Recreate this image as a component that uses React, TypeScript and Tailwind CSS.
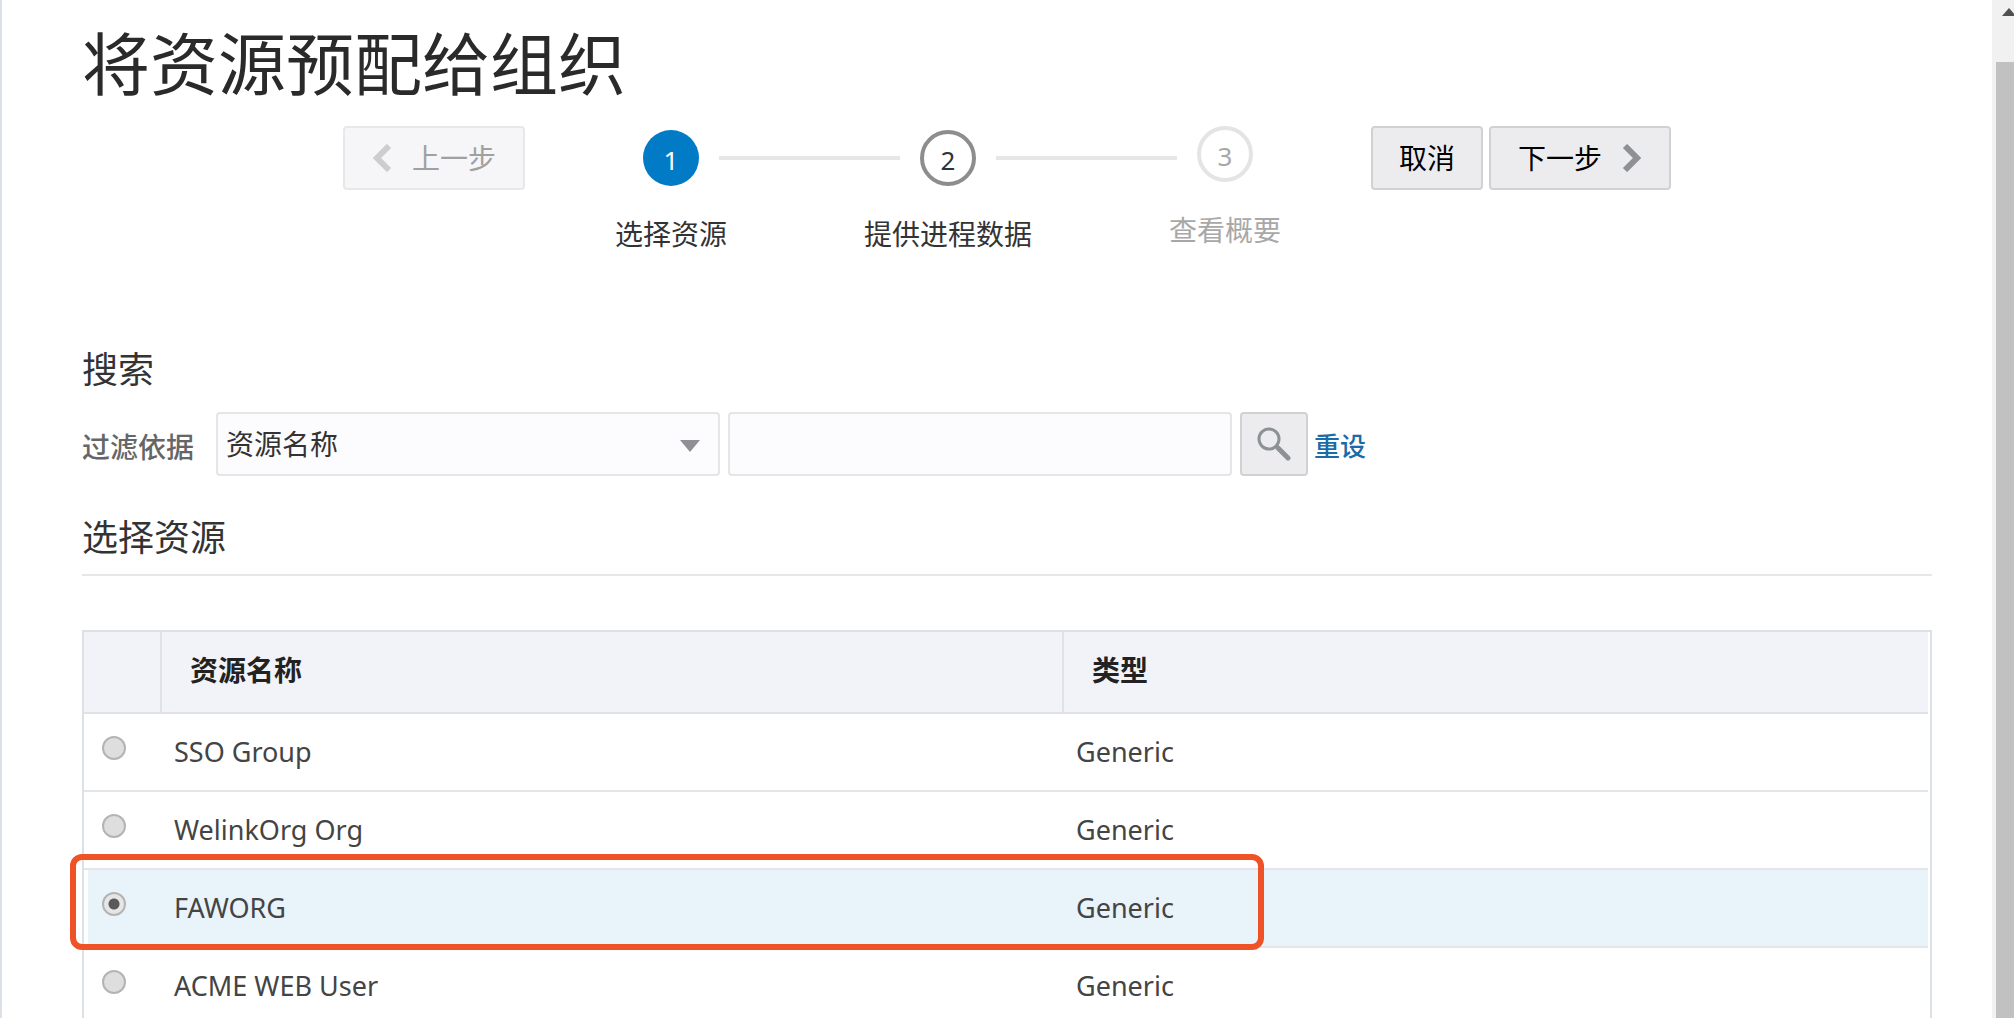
import React from 'react';
import clsx from 'clsx';

interface WizardStep {
  number: number;
  label: string;
  state: 'current' | 'next' | 'disabled';
}

interface Resource {
  id: string;
  name: string;
  type: string;
}

const steps: WizardStep[] = [
  { number: 1, label: '选择资源', state: 'current' },
  { number: 2, label: '提供进程数据', state: 'next' },
  { number: 3, label: '查看概要', state: 'disabled' }
];

const resources: Resource[] = [
  { id: 'sso-group', name: 'SSO Group', type: 'Generic' },
  { id: 'welink-org', name: 'WelinkOrg Org', type: 'Generic' },
  { id: 'faworg', name: 'FAWORG', type: 'Generic' },
  { id: 'acme-web-user', name: 'ACME WEB User', type: 'Generic' }
];

const Chevron: React.FC<{ direction: 'left' | 'right'; className?: string }> = ({ direction, className }) => (
  <svg viewBox="0 0 20 28" className={clsx('h-7 w-5', className)} fill="none" stroke="currentColor" strokeWidth="6" aria-hidden="true">
    <path d={direction === 'left' ? 'M17 2 L5 14 L17 26' : 'M3 2 L15 14 L3 26'} />
  </svg>
);

const WizardSteps: React.FC = () => (
  <ol className="flex items-start">
    {steps.map((step) => (
      <React.Fragment key={step.number}>
        {step.number > 1 && <li aria-hidden="true" className="mx-5 mt-[30px] h-1 w-[181px] bg-[#e6e6e6]" />}
        <li
          aria-current={step.state === 'current' ? 'step' : undefined}
          className={clsx('flex w-14 flex-col items-center', step.state !== 'disabled' && 'pt-1')}
        >
          <span
            className={clsx(
              'flex h-14 w-14 items-center justify-center rounded-full pt-1 text-[26px]',
              step.state === 'current' && 'bg-[#027bc7] text-white',
              step.state === 'next' && 'border-4 border-[#8b8d8f] text-[#333333]',
              step.state === 'disabled' && 'border-4 border-[#e4e4e4] text-[#a8a8a8]'
            )}
          >
            {step.number}
          </span>
          <span
            className={clsx(
              'mt-7 whitespace-nowrap text-[28px] leading-10',
              step.state === 'disabled' ? 'text-[#a8a8a8]' : 'text-[#333333]'
            )}
          >
            {step.label}
          </span>
        </li>
      </React.Fragment>
    ))}
  </ol>
);

const ResourceTable: React.FC = () => {
  const [selected, setSelected] = React.useState('faworg');

  return (
    <div className="border-2 border-[#dce1e6] pr-0.5">
      <table className="w-full table-fixed border-separate border-spacing-0 text-left">
        <colgroup>
          <col className="w-[78px]" />
          <col className="w-[902px]" />
          <col />
        </colgroup>
        <thead>
          <tr className="h-[82px] bg-[#f2f3f8] text-[28px] text-[#222222]">
            <th className="border-r-2 border-b-2 border-[#dfe3e7]" aria-label="选择" />
            <th className="border-r-2 border-b-2 border-[#dfe3e7] pb-1 pl-7 font-bold">资源名称</th>
            <th className="border-b-2 border-[#dfe3e7] pb-1 pl-7 font-bold">类型</th>
          </tr>
        </thead>
        <tbody>
          {resources.map((resource) => {
            const isSelected = resource.id === selected;

            return (
              <tr key={resource.id} className={clsx('h-[78px] text-[27px] text-[#444444]', isSelected && 'bg-[#e8f3fa]')}>
                <td className="relative border-b-2 border-[#e3e5e8] pl-[18px] align-top shadow-[inset_4px_0_0_#ffffff]">
                  {/* Callout around the selected resource */}
                  {isSelected && (
                    <div className="pointer-events-none absolute -top-4 -left-3.5 z-10 h-24 w-[1194px] rounded-xl border-[6px] border-[#ee5226]" />
                  )}
                  <input
                    type="radio"
                    name="resource"
                    id={resource.id}
                    checked={isSelected}
                    onChange={() => setSelected(resource.id)}
                    className="mt-[22px] block h-6 w-6 appearance-none rounded-full border-2 border-[#b4b4b4] bg-[#dedede] checked:bg-[radial-gradient(circle,#5a5a5a_5px,#e6e6e6_6px)]"
                  />
                </td>
                <td className="border-b-2 border-[#e3e5e8] pl-3">
                  <label htmlFor={resource.id}>{resource.name}</label>
                </td>
                <td className="border-b-2 border-[#e3e5e8] pl-3">{resource.type}</td>
              </tr>
            );
          })}
        </tbody>
      </table>
    </div>
  );
};

const App: React.FC = () => {
  return (
    <div className="flex h-screen overflow-hidden bg-white font-['Noto_Sans','Noto_Sans_CJK_SC',sans-serif]">
      <main className="min-w-0 flex-1 border-l-2 border-[#dbe1e7] pr-[60px] pl-20">
        <h1 className="pt-4 text-[68px] leading-[96px] text-[#2a2a2a]">将资源预配给组织</h1>

        {/* Wizard navigation */}
        <div className="mt-3.5 flex items-start justify-center gap-[118px]">
          <button
            type="button"
            disabled
            className="flex h-16 w-[182px] items-center justify-center gap-5 rounded border-2 border-[#e8e8e9] bg-[#f6f6f8] text-[28px] text-[#a0a0a0]"
          >
            <Chevron direction="left" className="text-[#cccdce]" />
            上一步
          </button>
          <WizardSteps />
          <div className="flex gap-1.5">
            <button type="button" className="h-16 w-28 rounded border-2 border-[#d0d1d3] bg-[#ececee] text-[28px] text-black">
              取消
            </button>
            <button
              type="button"
              className="flex h-16 w-[182px] items-center justify-center gap-5 rounded border-2 border-[#d0d1d3] bg-[#ececee] text-[28px] text-black"
            >
              下一步
              <Chevron direction="right" className="text-[#8e9194]" />
            </button>
          </div>
        </div>

        {/* Search */}
        <section className="mt-[90px]">
          <h2 className="text-[36px] leading-[52px] text-[#333333]">搜索</h2>
          <form className="mt-4 flex items-center" onSubmit={(e) => e.preventDefault()}>
            <label htmlFor="filter-field" className="w-[134px] pt-1.5 text-[28px] font-medium text-[#666666]">
              过滤依据
            </label>
            <div className="relative mr-2">
              <select
                id="filter-field"
                className="block h-16 w-[504px] appearance-none rounded border-2 border-[#e6e6e7] bg-[#fcfcfe] px-2 text-[28px] text-[#333333]"
              >
                <option>资源名称</option>
              </select>
              <svg viewBox="0 0 20 12" className="pointer-events-none absolute top-7 right-5 h-3 w-5 fill-[#8e9094]" aria-hidden="true">
                <path d="M0 0H20L10 12Z" />
              </svg>
            </div>
            <input
              type="text"
              aria-label="搜索值"
              className="mr-2 h-16 w-[504px] rounded border-2 border-[#e6e6e7] bg-[#fcfcfe] px-2 text-[28px] text-[#333333]"
            />
            <button
              type="submit"
              aria-label="搜索"
              className="mr-1.5 flex h-16 w-[68px] items-center justify-center rounded border-2 border-[#d0d1d3] bg-[#ececee]"
            >
              <svg viewBox="0 0 34 34" className="h-[34px] w-[34px] text-[#8e9194]" fill="none" stroke="currentColor" aria-hidden="true">
                <circle cx="12" cy="12" r="10" strokeWidth="3" />
                <path d="M21 21 L31 31" strokeWidth="5" strokeLinecap="round" />
              </svg>
            </button>
            <a href="#reset" className="pt-1 text-[26px] font-medium text-[#1a6ba8]">
              重设
            </a>
          </form>
        </section>

        {/* Resources */}
        <section className="mt-9">
          <h2 className="border-b-2 border-[#e6e7e9] pb-2.5 text-[36px] leading-[52px] text-[#333333]">选择资源</h2>
          <div className="mt-[54px]">
            <ResourceTable />
          </div>
        </section>
      </main>

      {/* Scroll track */}
      <div className="w-[22px] overflow-hidden bg-[#f1f1f1] pl-1" aria-hidden="true">
        <div className="h-[62px] w-6 pt-2 pl-1.5">
          <svg viewBox="0 0 14 8" className="h-2 w-3.5 fill-[#505050]">
            <path d="M7 0 L14 8 H0Z" />
          </svg>
        </div>
        <div className="h-full bg-[#c1c1c1]" />
      </div>
    </div>
  );
};

export default App;
